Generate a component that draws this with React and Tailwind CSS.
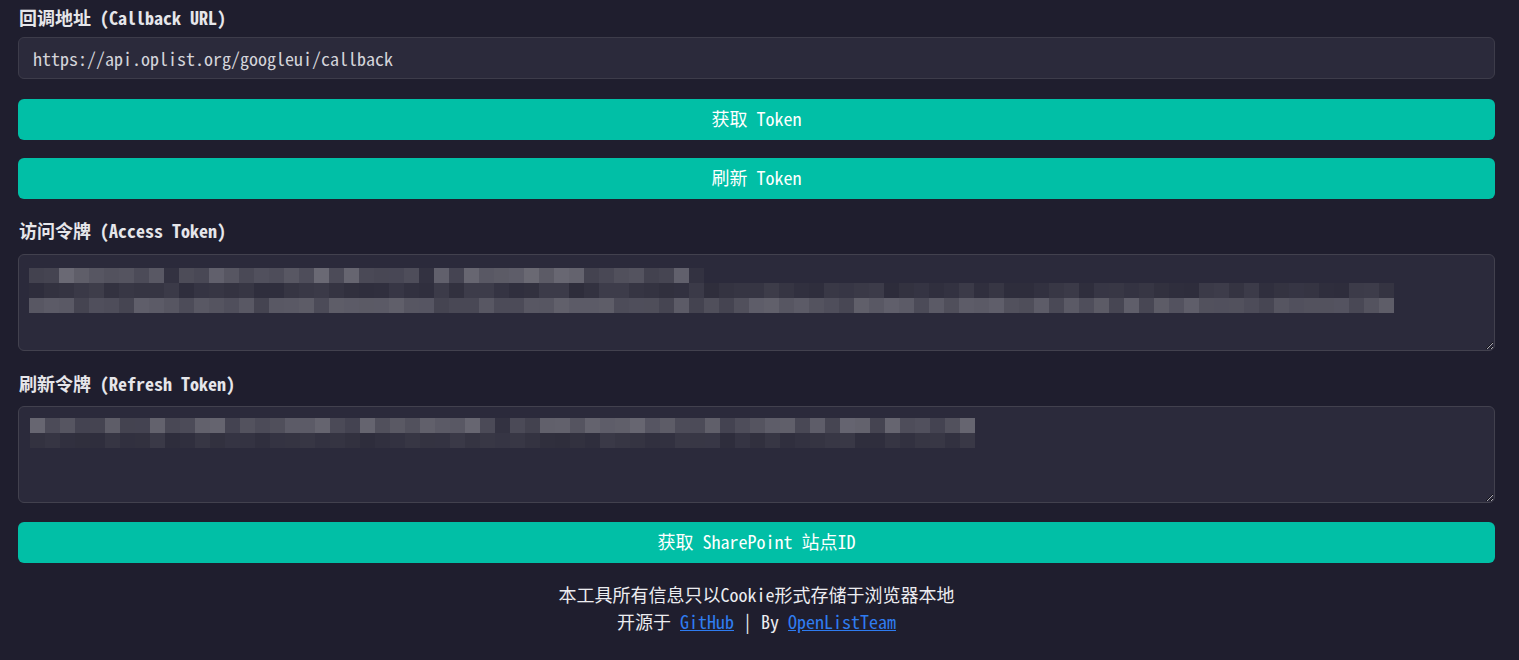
import React from "react";

function makeRng(seed) {
  let a = seed >>> 0;
  return () => {
    a = (a + 0x6d2b79f5) >>> 0;
    let t = a;
    t = Math.imul(t ^ (t >>> 15), t | 1);
    t ^= t + Math.imul(t ^ (t >>> 7), t | 61);
    return ((t ^ (t >>> 14)) >>> 0) / 4294967296;
  };
}

function shade(l) {
  const a = [44, 43, 58];
  const b = [118, 117, 127];
  const c = a.map((v, i) => Math.round(v + (b[i] - v) * l));
  return `rgb(${c[0]},${c[1]},${c[2]})`;
}

function MosaicRow({ count, seed, min, max, dark = [] }) {
  const r = makeRng(seed);
  const cells = [];
  for (let i = 0; i < count; i++) {
    let l = min + (max - min) * r();
    if (dark.includes(i)) l = 0.1;
    cells.push(<div key={i} className="w-[15px] h-[15px]" style={{ backgroundColor: shade(l) }} />);
  }
  return <div className="flex">{cells}</div>;
}

function TokenArea({ rows, offsetClass }) {
  return (
    <div className="relative">
      <textarea
        readOnly
        className="block w-full h-[97px] rounded-md border border-[#42414e] bg-[#2b2a3b] resize-y outline-none [color-scheme:dark]"
      />
      <div className={`pointer-events-none absolute flex flex-col ${offsetClass}`}>
        {rows.map((row, i) => (
          <MosaicRow key={i} {...row} />
        ))}
      </div>
    </div>
  );
}

function Label({ children, className = "" }) {
  return (
    <div className={`text-[18px] leading-[24px] font-bold text-[#e6e6ea] ${className}`}>{children}</div>
  );
}

function Btn({ children, className = "" }) {
  return (
    <button
      className={`w-full h-[41px] rounded-md bg-[#01bfa6] text-white text-[18px] leading-[24px] flex items-center justify-center pb-[4px] ${className}`}
    >
      {children}
    </button>
  );
}

export default function App() {
  return (
    <div className="min-h-[660px] bg-[#1f1e2e] font-['Noto_Sans_Mono_CJK_SC','Noto_Sans_CJK_SC','Liberation_Mono',monospace]">
      <div className="pl-[18px] pr-[24px] pt-[5px] pb-6 flex flex-col">
        <Label className="mb-[8px] pl-px">回调地址 (Callback URL)</Label>
        <input
          readOnly
          value="https://api.oplist.org/googleui/callback"
          className="h-[42px] w-full rounded-md border border-[#3d3c4a] bg-[#2b2a3b] px-[14px] text-[18px] text-[#d4d4da] outline-none"
        />
        <Btn className="mt-[20px]">获取 Token</Btn>
        <Btn className="mt-[18px]">刷新 Token</Btn>
        <Label className="mt-[19px] mb-[12px] pl-px">访问令牌 (Access Token)</Label>
        <TokenArea
          offsetClass="left-[11px] top-[14px]"
          rows={[
            { count: 45, seed: 7, min: 0.3, max: 0.85, dark: [9, 26, 44] },
            { count: 91, seed: 19, min: 0.02, max: 0.24 },
            { count: 91, seed: 31, min: 0.32, max: 0.72 },
          ]}
        />
        <Label className="mt-[20px] mb-[11px] pl-px">刷新令牌 (Refresh Token)</Label>
        <TokenArea
          offsetClass="left-[12px] top-[12px]"
          rows={[
            { count: 63, seed: 43, min: 0.3, max: 0.8, dark: [31] },
            { count: 63, seed: 59, min: 0.02, max: 0.2 },
          ]}
        />
        <Btn className="mt-[19px]">获取 SharePoint 站点ID</Btn>
        <div className="mt-[18px] text-center text-[18px] leading-[27px] text-[#ececf0]">
          <div>本工具所有信息只以Cookie形式存储于浏览器本地</div>
          <div>
            开源于 <a href="#" className="text-[#2f7cf0] underline">GitHub</a> | By{" "}
            <a href="#" className="text-[#2f7cf0] underline">OpenListTeam</a>
          </div>
        </div>
      </div>
    </div>
  );
}
